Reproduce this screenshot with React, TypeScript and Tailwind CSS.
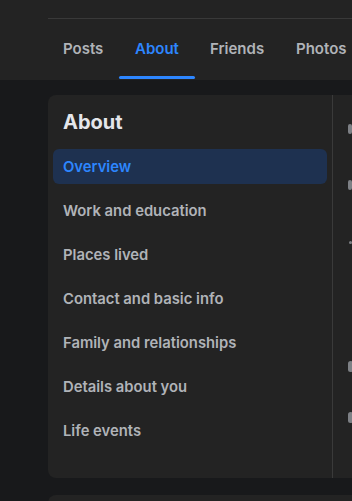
import React from "react";

const items = [
  "Overview",
  "Work and education",
  "Places lived",
  "Contact and basic info",
  "Family and relationships",
  "Details about you",
  "Life events",
];

export default function App() {
  return (
    <div
      className="w-[352px] h-[501px] overflow-hidden bg-[#18191b]"
      style={{ fontFamily: "Inter, 'Noto Sans', sans-serif" }}
    >
      <div className="h-[80px] bg-[#232323] pl-[48px] flex flex-col">
        <div className="h-[18px]" />
        <div className="h-px bg-[#393939]" />
        <div className="flex pl-[15px] h-[61px] text-[15px] font-semibold text-[#b0b3b8]">
          <div className="w-[72px] flex items-center pb-[1px]">Posts</div>
          <div className="relative w-[75px] flex items-center pb-[1px] text-[#2d86ff]">
            About
            <div className="absolute left-[-16px] w-[76px] bottom-[1px] h-[3px] bg-[#2d86ff] rounded-sm" />
          </div>
          <div className="w-[86px] flex items-center pb-[1px]">Friends</div>
          <div className="flex items-center pb-[1px] whitespace-nowrap">Photos</div>
        </div>
      </div>
      <div className="pl-[48px] pt-[15px]">
        <div className="flex h-[383px] bg-[#232323] rounded-l-[8px]">
          <div className="w-[285px] border-r border-[#3a3a3a] px-[5px] pt-[15px]">
            <div className="pl-[10px] text-[20px] font-bold text-[#e4e6eb] leading-[24px] h-[39px]">
              About
            </div>
            <div className="flex flex-col gap-[9px] text-[14.8px] font-semibold">
              {items.map((t, i) => (
                <div
                  key={t}
                  className={
                    i === 0
                      ? "h-[35px] rounded-[6px] bg-[#1e3150] text-[#2d86ff] pl-[10px] pt-[2px] flex items-center"
                      : "h-[35px] pl-[10px] pt-[2px] flex items-center text-[#b0b3b8]"
                  }
                >
                  {t}
                </div>
              ))}
            </div>
          </div>
          <div className="relative flex-1">
            <div className="absolute left-[15px] top-[29px] w-[4px] h-[10px] rounded-sm bg-[#7d8085]" />
            <div className="absolute left-[15px] top-[85px] w-[4px] h-[10px] rounded-sm bg-[#7d8085]" />
            <div className="absolute left-[16px] top-[146px] w-[3px] h-[3px] rounded-sm bg-[#7d8085]" />
            <div className="absolute left-[15px] top-[266px] w-[5px] h-[11px] rounded-full bg-[#7d8085]" />
            <div className="absolute left-[15px] top-[317px] w-[5px] h-[11px] rounded-full bg-[#7d8085]" />
          </div>
        </div>
        <div className="mt-[17px] h-[20px] bg-[#232323] rounded-tl-[8px]" />
      </div>
    </div>
  );
}
